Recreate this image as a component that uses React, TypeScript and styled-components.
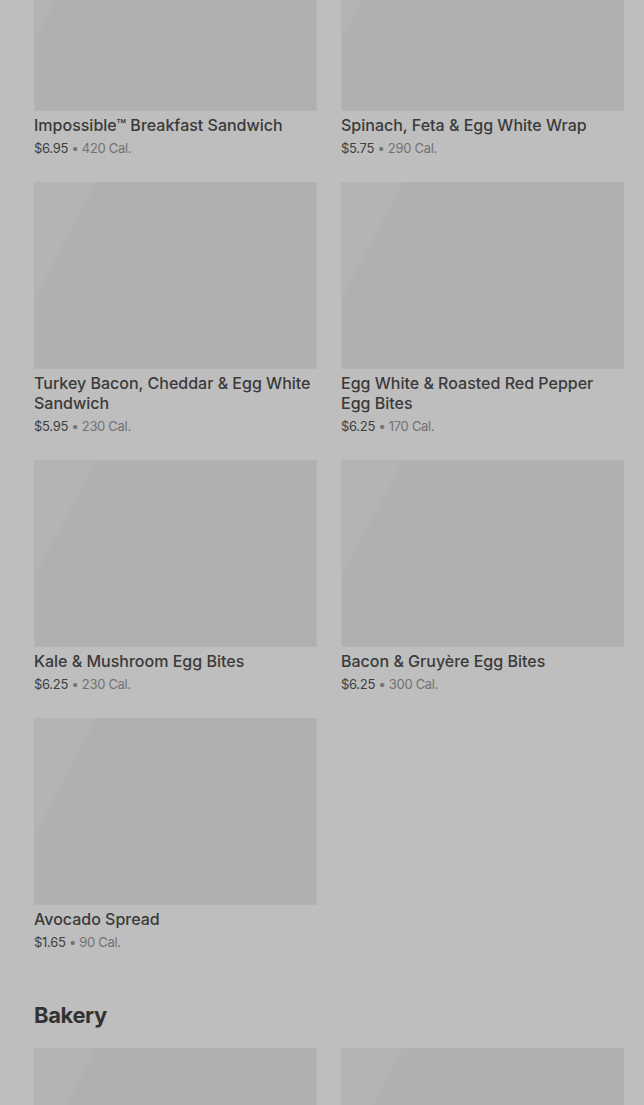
import React from "react";
import styled, { createGlobalStyle } from "styled-components";

const Global = createGlobalStyle`
  html, body { margin: 0; padding: 0; background: #bebebe; }
  body { font-family: Inter, "Noto Sans", Arial, sans-serif; overflow: hidden; }
`;

const Page = styled.div`
  padding: 0 20px 0 34px;
  margin-top: -76px;
`;

const Grid = styled.div`
  display: grid;
  grid-template-columns: 283px 283px;
  column-gap: 24px;
  row-gap: 24px;
`;

const Card = styled.div`
  display: flex;
  flex-direction: column;
`;

const Thumb = styled.div`
  height: 187px;
  background: linear-gradient(118deg, #b4b4b4 0, #b4b4b4 52px, #b0b0b0 58px, #b0b0b0 100%);
  box-shadow: inset 0 0 0 1px #b3b3b3;
  margin-bottom: 4px;
`;

const Title = styled.div`
  font-size: 16px;
  line-height: 20px;
  font-weight: 500;
  color: #3a3a3a;
  letter-spacing: 0;
`;

const Meta = styled.div`
  margin-top: 3px;
  font-size: 13px;
  line-height: 20px;
  color: #3e3e3e;
  letter-spacing: -0.3px;
`;

const Cal = styled.span`
  color: #727272;
`;

const Heading = styled.h2`
  margin: 49px 0 19px;
  font-size: 22px;
  line-height: 28px;
  font-weight: 700;
  color: #323232;
  letter-spacing: -0.4px;
`;

const items = [
  ["Impossible™ Breakfast Sandwich", "$6.95", "420 Cal."],
  ["Spinach, Feta & Egg White Wrap", "$5.75", "290 Cal."],
  ["Turkey Bacon, Cheddar & Egg White Sandwich", "$5.95", "230 Cal."],
  ["Egg White & Roasted Red Pepper Egg Bites", "$6.25", "170 Cal."],
  ["Kale & Mushroom Egg Bites", "$6.25", "230 Cal."],
  ["Bacon & Gruyère Egg Bites", "$6.25", "300 Cal."],
  ["Avocado Spread", "$1.65", "90 Cal."],
];

export default function App() {
  return (
    <>
      <Global />
      <Page>
        <Grid>
          {items.map(([t, p, c]) => (
            <Card key={t}>
              <Thumb />
              <Title>{t}</Title>
              <Meta>
                {p} <Cal>• {c}</Cal>
              </Meta>
            </Card>
          ))}
        </Grid>
        <Heading>Bakery</Heading>
        <Grid>
          <Card>
            <Thumb />
          </Card>
          <Card>
            <Thumb />
          </Card>
        </Grid>
      </Page>
    </>
  );
}
